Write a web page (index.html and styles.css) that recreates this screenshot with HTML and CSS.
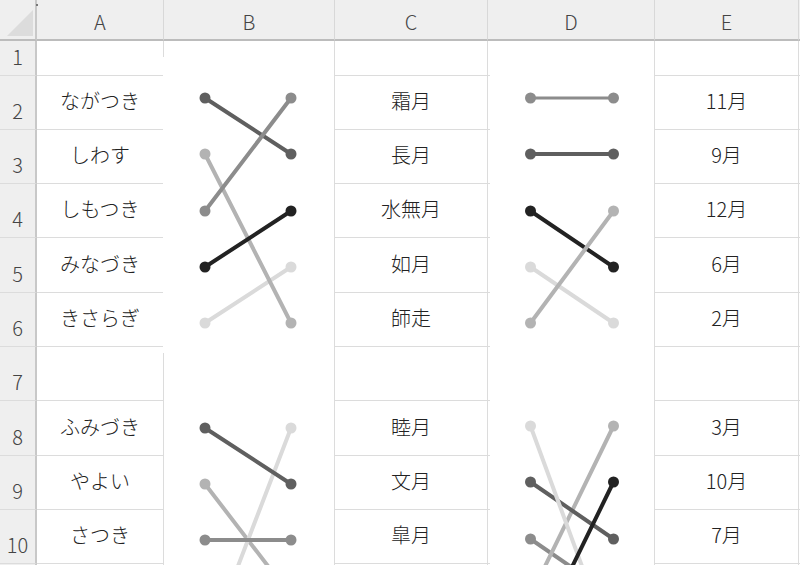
FILE: index.html
```html
<!DOCTYPE html>
<html lang="ja">
<head>
<meta charset="utf-8">
<title>Sheet</title>
<link rel="stylesheet" href="styles.css">
</head>
<body>
<div class="sheet">
  <div class="grid">
    <div class="corner"><svg class="tri" width="26" height="26" viewBox="0 0 26 26"><polygon points="0,26 26,0 26,26" fill="#dcdcdc"/></svg></div>
    <div class="ch">A</div><div class="ch">B</div><div class="ch">C</div><div class="ch">D</div><div class="ch">E</div><div class="ch"></div>

    <div class="rh">1</div><div class="c"></div><div class="c"></div><div class="c"></div><div class="c"></div><div class="c"></div><div class="c"></div>
    <div class="rh">2</div><div class="c">ながつき</div><div class="c"></div><div class="c">霜月</div><div class="c"></div><div class="c">11月</div><div class="c"></div>
    <div class="rh">3</div><div class="c">しわす</div><div class="c"></div><div class="c">長月</div><div class="c"></div><div class="c">9月</div><div class="c"></div>
    <div class="rh">4</div><div class="c">しもつき</div><div class="c"></div><div class="c">水無月</div><div class="c"></div><div class="c">12月</div><div class="c"></div>
    <div class="rh">5</div><div class="c">みなづき</div><div class="c"></div><div class="c">如月</div><div class="c"></div><div class="c">6月</div><div class="c"></div>
    <div class="rh">6</div><div class="c">きさらぎ</div><div class="c"></div><div class="c">師走</div><div class="c"></div><div class="c">2月</div><div class="c"></div>
    <div class="rh">7</div><div class="c"></div><div class="c"></div><div class="c"></div><div class="c"></div><div class="c"></div><div class="c"></div>
    <div class="rh">8</div><div class="c">ふみづき</div><div class="c"></div><div class="c">睦月</div><div class="c"></div><div class="c">3月</div><div class="c"></div>
    <div class="rh">9</div><div class="c">やよい</div><div class="c"></div><div class="c">文月</div><div class="c"></div><div class="c">10月</div><div class="c"></div>
    <div class="rh">10</div><div class="c">さつき</div><div class="c"></div><div class="c">皐月</div><div class="c"></div><div class="c">7月</div><div class="c"></div>
    <div class="rh"></div><div class="c"></div><div class="c"></div><div class="c"></div><div class="c"></div><div class="c"></div><div class="c"></div>
  </div>

  <div class="handle"></div>

  <div class="chart b1">
    <svg width="171" height="296" viewBox="163 57 171 296">
      <g stroke-width="4" stroke-linecap="round">
        <line x1="205" y1="323" x2="291" y2="267" stroke="#dadada"/>
        <line x1="205" y1="154" x2="291" y2="323" stroke="#b3b3b3"/>
        <line x1="205" y1="98" x2="291" y2="154" stroke="#5f5f5f"/>
        <line x1="205" y1="211" x2="291" y2="98" stroke="#8c8c8c"/>
        <line x1="205" y1="267" x2="291" y2="211" stroke="#222222"/>
      </g>
      <g>
        <circle cx="205" cy="323" r="5.5" fill="#dadada"/><circle cx="291" cy="267" r="5.5" fill="#dadada"/>
        <circle cx="205" cy="154" r="5.5" fill="#b3b3b3"/><circle cx="291" cy="323" r="5.5" fill="#b3b3b3"/>
        <circle cx="205" cy="98" r="5.5" fill="#5f5f5f"/><circle cx="291" cy="154" r="5.5" fill="#5f5f5f"/>
        <circle cx="205" cy="211" r="5.5" fill="#8c8c8c"/><circle cx="291" cy="98" r="5.5" fill="#8c8c8c"/>
        <circle cx="205" cy="267" r="5.5" fill="#222222"/><circle cx="291" cy="211" r="5.5" fill="#222222"/>
      </g>
    </svg>
  </div>

  <div class="chart d1">
    <svg width="164" height="296" viewBox="490 57 164 296">
      <g stroke-width="4" stroke-linecap="round">
        <line x1="530.5" y1="98" x2="613.5" y2="98" stroke="#8c8c8c" stroke-width="3"/>
        <line x1="530.5" y1="154" x2="613.5" y2="154" stroke="#5f5f5f"/>
        <line x1="530.5" y1="267" x2="613.5" y2="323" stroke="#dadada"/>
        <line x1="530.5" y1="211" x2="613.5" y2="267" stroke="#222222"/>
        <line x1="530.5" y1="323" x2="613.5" y2="211" stroke="#b3b3b3"/>
      </g>
      <g>
        <circle cx="530.5" cy="98" r="5.5" fill="#8c8c8c"/><circle cx="613.5" cy="98" r="5.5" fill="#8c8c8c"/>
        <circle cx="530.5" cy="154" r="5.5" fill="#5f5f5f"/><circle cx="613.5" cy="154" r="5.5" fill="#5f5f5f"/>
        <circle cx="530.5" cy="267" r="5.5" fill="#dadada"/><circle cx="613.5" cy="323" r="5.5" fill="#dadada"/>
        <circle cx="530.5" cy="211" r="5.5" fill="#222222"/><circle cx="613.5" cy="267" r="5.5" fill="#222222"/>
        <circle cx="530.5" cy="323" r="5.5" fill="#b3b3b3"/><circle cx="613.5" cy="211" r="5.5" fill="#b3b3b3"/>
      </g>
    </svg>
  </div>

  <div class="chart b2">
    <svg width="170" height="220" viewBox="164 353 170 220">
      <g stroke-width="4" stroke-linecap="round">
        <line x1="205" y1="596" x2="291" y2="652" stroke="#222222"/>
        <line x1="205" y1="484" x2="291" y2="596" stroke="#b3b3b3"/>
        <line x1="205" y1="652" x2="291" y2="428" stroke="#dadada"/>
        <line x1="205" y1="540" x2="291" y2="540" stroke="#8c8c8c"/>
        <line x1="205" y1="428" x2="291" y2="484" stroke="#5f5f5f"/>
      </g>
      <g>
        <circle cx="205" cy="428" r="5.5" fill="#5f5f5f"/><circle cx="291" cy="484" r="5.5" fill="#5f5f5f"/>
        <circle cx="205" cy="484" r="5.5" fill="#b3b3b3"/>
        <circle cx="205" cy="540" r="5.5" fill="#8c8c8c"/><circle cx="291" cy="540" r="5.5" fill="#8c8c8c"/>
        <circle cx="291" cy="428" r="5.5" fill="#dadada"/>
      </g>
    </svg>
  </div>

  <div class="chart d2">
    <svg width="164" height="220" viewBox="490 353 164 220">
      <g stroke-width="4" stroke-linecap="round">
        <line x1="530.5" y1="539" x2="613.5" y2="596" stroke="#8c8c8c"/>
        <line x1="530.5" y1="596" x2="613.5" y2="426" stroke="#b3b3b3"/>
        <line x1="530.5" y1="482" x2="613.5" y2="539" stroke="#5f5f5f"/>
        <line x1="530.5" y1="426" x2="613.5" y2="652" stroke="#dadada"/>
        <line x1="530.5" y1="652" x2="613.5" y2="482" stroke="#222222"/>
      </g>
      <g>
        <circle cx="530.5" cy="426" r="5.5" fill="#dadada"/>
        <circle cx="613.5" cy="426" r="5.5" fill="#b3b3b3"/>
        <circle cx="530.5" cy="482" r="5.5" fill="#5f5f5f"/><circle cx="613.5" cy="539" r="5.5" fill="#5f5f5f"/>
        <circle cx="530.5" cy="539" r="5.5" fill="#8c8c8c"/>
        <circle cx="613.5" cy="482" r="5.5" fill="#222222"/>
      </g>
    </svg>
  </div>
</div>
</body>
</html>
```

FILE: styles.css
```css
html, body {
  margin: 0;
  padding: 0;
  background: #ffffff;
  overflow: hidden;
}

.sheet {
  position: relative;
  width: 800px;
  height: 565px;
  overflow: hidden;
  font-family: "Noto Sans CJK JP", "Noto Sans", sans-serif;
  font-weight: 300;
  color: #222222;
}

.grid {
  display: grid;
  grid-template-columns: 37px 127px 171px 153px 167px 144px 60px;
  grid-template-rows: 41px 35px 54px 54px 54px 55px 54px 54px 55px 54px 54px 54px;
}

.corner {
  background: #efefef;
  border-right: 2px solid #c8c8c8;
  border-bottom: 2px solid #bcbcbc;
  display: flex;
  align-items: flex-end;
  justify-content: flex-end;
  padding: 0 2px 3px 0;
  box-sizing: border-box;
}

.tri {
  display: block;
}

.ch {
  background: #efefef;
  border-right: 1px solid #d8d8d8;
  border-bottom: 2px solid #bcbcbc;
  box-sizing: border-box;
  display: flex;
  align-items: center;
  justify-content: center;
  padding-top: 3px;
  font-size: 20px;
  color: #444444;
}

.rh {
  background: #efefef;
  border-right: 2px solid #c8c8c8;
  border-bottom: 1px solid #dcdcdc;
  box-sizing: border-box;
  display: flex;
  align-items: flex-end;
  justify-content: center;
  padding-bottom: 6px;
  font-size: 20px;
  line-height: 24px;
  color: #444444;
}

.c {
  border-right: 1px solid #dcdcdc;
  border-bottom: 1px solid #dcdcdc;
  box-sizing: border-box;
  display: flex;
  align-items: center;
  justify-content: center;
  padding-bottom: 3px;
  font-size: 20px;
  line-height: 24px;
  color: #222222;
}

.handle {
  position: absolute;
  left: 36px;
  top: 4px;
  width: 2px;
  height: 2px;
  background: #777777;
}

.chart {
  position: absolute;
  background: #ffffff;
}

.chart svg {
  display: block;
}

.b1 { left: 163px; top: 57px; width: 171px; height: 296px; }
.d1 { left: 490px; top: 57px; width: 164px; height: 296px; }
.b2 { left: 164px; top: 353px; width: 170px; height: 220px; }
.d2 { left: 490px; top: 353px; width: 164px; height: 220px; }
```
